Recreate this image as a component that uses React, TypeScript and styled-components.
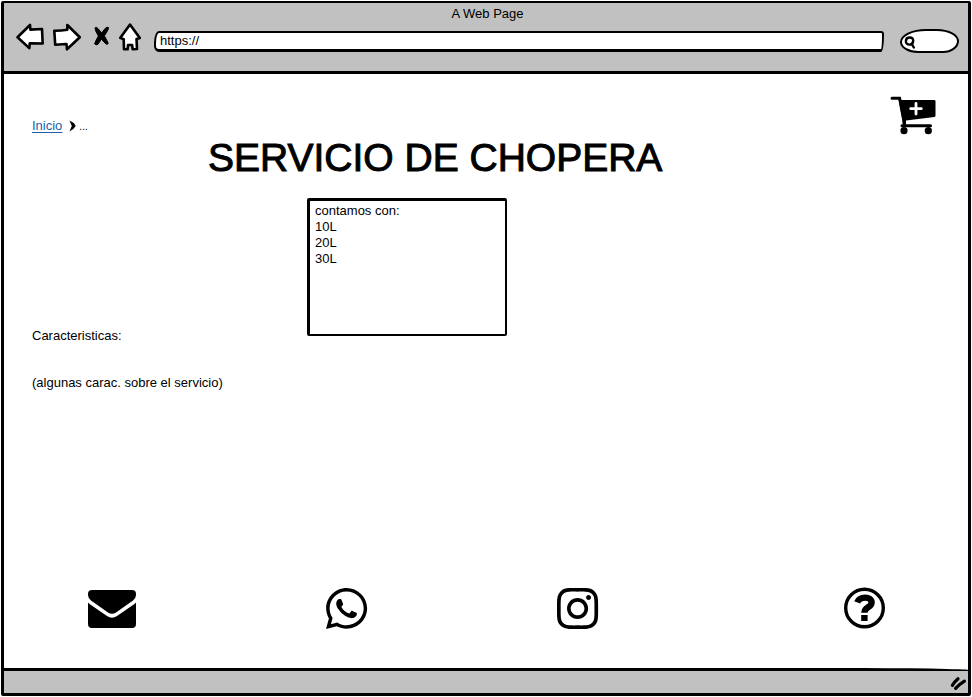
import React from "react";
import styled, { createGlobalStyle } from "styled-components";
import { FaInstagram, FaWhatsapp } from "react-icons/fa";

const GlobalStyle = createGlobalStyle`
  * { box-sizing: border-box; }
  body {
    margin: 0;
    background: #fff;
    color: #000;
    font: 13px/16px "Liberation Sans", Arial, sans-serif;
  }
`;

const Frame = styled.div`
  display: flex;
  flex-direction: column;
  min-height: calc(100vh - 2px);
  margin: 1px;
  border: 3px solid #000;
  border-top-width: 2px;
  border-radius: 2px;
`;

const Toolbar = styled.header`
  padding: 3px 9px 12px 12px;
  background: #c1c1c1;
  border-bottom: 3px solid #000;
`;

const WindowTitle = styled.div`
  text-align: center;
`;

const ToolbarRow = styled.div`
  display: flex;
  align-items: center;
  gap: 16px;
  height: 36px;
  margin-top: 1px;
`;

const NavButtons = styled.div`
  display: flex;
  align-items: center;
  gap: 9px;
  padding-bottom: 8px;
`;

const IconButton = styled.button`
  display: flex;
  padding: 0;
  border: 0;
  background: none;
  cursor: pointer;
  svg {
    display: block;
  }
`;

const Outline = styled.g`
  fill: #fff;
  stroke: #000;
  stroke-width: 2.6;
  stroke-linejoin: round;
`;

const AddressInput = styled.input`
  flex: 1;
  min-width: 0;
  height: 21px;
  margin-left: -3px;
  padding: 0 4px;
  border: 2px solid #000;
  border-bottom-width: 3px;
  border-radius: 5px 3px 3px 5px / 12px 3px 16px 6px;
  background: #fff;
  color: #000;
  font: inherit;
`;

const SearchBox = styled.label`
  display: flex;
  align-items: center;
  width: 59px;
  height: 24px;
  padding-left: 2px;
  border: 2px solid #000;
  border-radius: 26px 22px 16px 18px / 13px 12px 12px 11px;
  background: #fff;
`;

const SearchInput = styled.input`
  flex: 1;
  min-width: 0;
  height: 16px;
  padding: 0 4px;
  border: 0;
  outline: 0;
  background: none;
  font: inherit;
`;

const Page = styled.main`
  display: flex;
  flex: 1;
  flex-direction: column;
  padding: 22px 32px 39px 28px;
`;

const TopRow = styled.div`
  display: flex;
  align-items: flex-start;
  justify-content: space-between;
`;

const Breadcrumb = styled.nav`
  display: flex;
  align-items: center;
  gap: 3px;
  margin-top: 22px;
`;

const CrumbLink = styled.a`
  margin-right: 4px;
  color: #1a61a8;
  text-decoration: underline;
  text-underline-offset: 2px;
`;

const CrumbMore = styled.span`
  padding-top: 2px;
  font-size: 10px;
  line-height: 14px;
`;

const Heading = styled.h1`
  margin: 0 0 0 176px;
  font-size: 39px;
  font-weight: 400;
  line-height: 46px;
  -webkit-text-stroke: 1px #000;
`;

const Details = styled.section`
  display: grid;
  grid-template-columns: 275px 1fr;
  margin-top: 17px;
`;

const Features = styled.div`
  display: flex;
  flex-direction: column;
  gap: 31px;
  padding-top: 130px;
`;

const Text = styled.p`
  margin: 0;
`;

const Sizes = styled.textarea`
  display: block;
  width: 200px;
  height: 138px;
  padding: 2px 5px;
  border: 3px solid #000;
  border-width: 3px 2px 2px 3px;
  border-radius: 2px;
  outline: 0;
  background: #fff;
  color: #000;
  font: inherit;
  resize: none;
`;

const Contacts = styled.nav`
  display: grid;
  grid-template-columns: 238fr 231fr 287fr auto;
  align-items: center;
  margin-top: auto;
  padding: 0 51px 0 56px;
`;

const ContactLink = styled.a`
  display: flex;
  align-items: center;
  width: max-content;
  height: 42px;
  color: #000;
  svg {
    flex: none;
  }
`;

const StatusBar = styled.footer`
  display: flex;
  align-items: center;
  justify-content: flex-end;
  height: 25px;
  padding: 3px 1px 0 0;
  border-top: 3px solid #000;
  border-top-right-radius: 130px 2px;
  background: #c1c1c1;
`;

const BackIcon = () => (
  <svg width="28" height="28" aria-hidden="true">
    <Outline>
      <path d="M1.5 14.3 14 2l.4 4.6L26 6l.7 14.5-12.9-.3-.5 4.9Z" />
    </Outline>
  </svg>
);

const ForwardIcon = () => (
  <svg width="28" height="28" aria-hidden="true">
    <Outline>
      <path d="M1.3 7.7Q8 7.8 14.3 6.7V2L26.8 14.3 14 26.3l-.5-5.3-11.3.7Z" />
    </Outline>
  </svg>
);

const StopIcon = () => (
  <svg width="20" height="28" viewBox="-3 -3 20 28" aria-hidden="true">
    <path
      d="M2.2 1.6Q4 .8 5.4 3L8.6 7 12.2 2.4Q14.4.4 15.6 1.6 15.8 3.4 11.4 9.8L15.2 17Q15.2 18.8 13 18L8.4 13.2 5 18.2Q2.8 19.8 1.6 17.8 2 15.8 5.4 10 1.6 4 2.2 1.6Z"
      stroke="#000"
      strokeLinejoin="round"
    />
  </svg>
);

const HomeIcon = () => (
  <svg width="22" height="28" aria-hidden="true">
    <Outline>
      <path d="M11 1.6 20.8 15l-3.3 1 .5 10-4.3.3-.6-4.3H9l-.4 4.3H5l-.3-10-3.5-1.4Z" />
    </Outline>
  </svg>
);

const SearchIcon = () => (
  <svg width="12" height="15" fill="none" stroke="#000" strokeWidth="2.4" strokeLinecap="round" aria-hidden="true">
    <path d="M5.2 3.5Q9.4 3.3 9.2 7 8.8 10.5 5.8 10.6 1.8 10.5 1.9 7 2 3.7 5.2 3.5M8 10.3 9.8 13.5" />
  </svg>
);

const CrumbArrow = () => (
  <svg width="7" height="12" aria-hidden="true">
    <path d="M.4.6Q4.4 2 6.8 6 4.4 10 .4 11.4L2.8 6Z" />
  </svg>
);

const CartIcon = () => (
  <svg width="46" height="39" aria-hidden="true">
    <path d="M8.7 4H44.2Q45.5 4 45.5 5.2V19.6Q45.5 20.7 44.3 20.9L16 24.6V29H12.6V24.6Z" />
    <path d="M2 2.3H9.6L14.3 27M12 29.7H40.5" fill="none" stroke="#000" strokeWidth="3" strokeLinecap="round" />
    <circle cx="14" cy="34.7" r="3.6" />
    <circle cx="38.3" cy="34.7" r="3.6" />
    <path d="M26 7.5V18M20.7 12.7H31.3" stroke="#fff" strokeWidth="2.8" strokeLinecap="round" />
  </svg>
);

const MailIcon = () => (
  <svg width="48" height="42" viewBox="0 -3 48 42" aria-hidden="true">
    <path d="M4 0H44Q48 0 48 4V5Q48 8 45 10.5L28 22.4Q24 25 20 22.4L3 10.5Q0 8 0 5V4Q0 0 4 0Z" />
    <path d="M0 12.5Q1 13.7 3 15L19 26Q24 29.4 29 26L45 15Q47 13.7 48 12.5V34Q48 38 44 38H4Q0 38 0 34Z" />
  </svg>
);

const HelpIcon = () => (
  <svg width="41" height="42" fill="none" stroke="#000" aria-hidden="true">
    <circle cx="20.5" cy="21" r="18.8" strokeWidth="3.4" />
    <path d="M13.2 15.4C15.6 9 27.6 9 27.6 15.4 27.6 20.4 20.4 20 20.4 25.8" strokeWidth="6.4" />
    <path d="M17.2 31H23.6" strokeWidth="6" />
  </svg>
);

const ResizeMark = () => (
  <svg width="17" height="15" fill="none" stroke="#000" strokeWidth="3.2" strokeLinecap="round" aria-hidden="true">
    <path d="M2.4 9.4Q4.6 5.7 8 2.8M5.6 12.4Q9.5 8.2 14.4 5.2" />
  </svg>
);

export default function App() {
  return (
    <>
      <GlobalStyle />
      <Frame>
        <Toolbar>
          <WindowTitle>A Web Page</WindowTitle>
          <ToolbarRow>
            <NavButtons>
              <IconButton aria-label="Back"><BackIcon /></IconButton>
              <IconButton aria-label="Forward"><ForwardIcon /></IconButton>
              <IconButton aria-label="Stop"><StopIcon /></IconButton>
              <IconButton aria-label="Home"><HomeIcon /></IconButton>
            </NavButtons>
            <AddressInput aria-label="Address" defaultValue="https://" />
            <SearchBox>
              <SearchIcon />
              <SearchInput type="text" aria-label="Search" />
            </SearchBox>
          </ToolbarRow>
        </Toolbar>
        <Page>
          <TopRow>
            <Breadcrumb aria-label="Breadcrumb">
              <CrumbLink href="#inicio">Inicio</CrumbLink>
              <CrumbArrow />
              <CrumbMore>...</CrumbMore>
            </Breadcrumb>
            <IconButton aria-label="Cart"><CartIcon /></IconButton>
          </TopRow>
          <Heading>SERVICIO DE CHOPERA</Heading>
          <Details>
            <Features>
              <Text>Caracteristicas:</Text>
              <Text>(algunas carac. sobre el servicio)</Text>
            </Features>
            <Sizes aria-label="Contamos con" defaultValue={"contamos con:\n10L\n20L\n30L"} />
          </Details>
          <Contacts aria-label="Contact">
            <ContactLink href="#mail" aria-label="Mail"><MailIcon /></ContactLink>
            <ContactLink href="#whatsapp" aria-label="WhatsApp"><FaWhatsapp size={47} preserveAspectRatio="xMinYMid" /></ContactLink>
            <ContactLink href="#instagram" aria-label="Instagram"><FaInstagram size={47} preserveAspectRatio="xMinYMid" /></ContactLink>
            <ContactLink href="#help" aria-label="Help"><HelpIcon /></ContactLink>
          </Contacts>
        </Page>
        <StatusBar>
          <ResizeMark />
        </StatusBar>
      </Frame>
    </>
  );
}
